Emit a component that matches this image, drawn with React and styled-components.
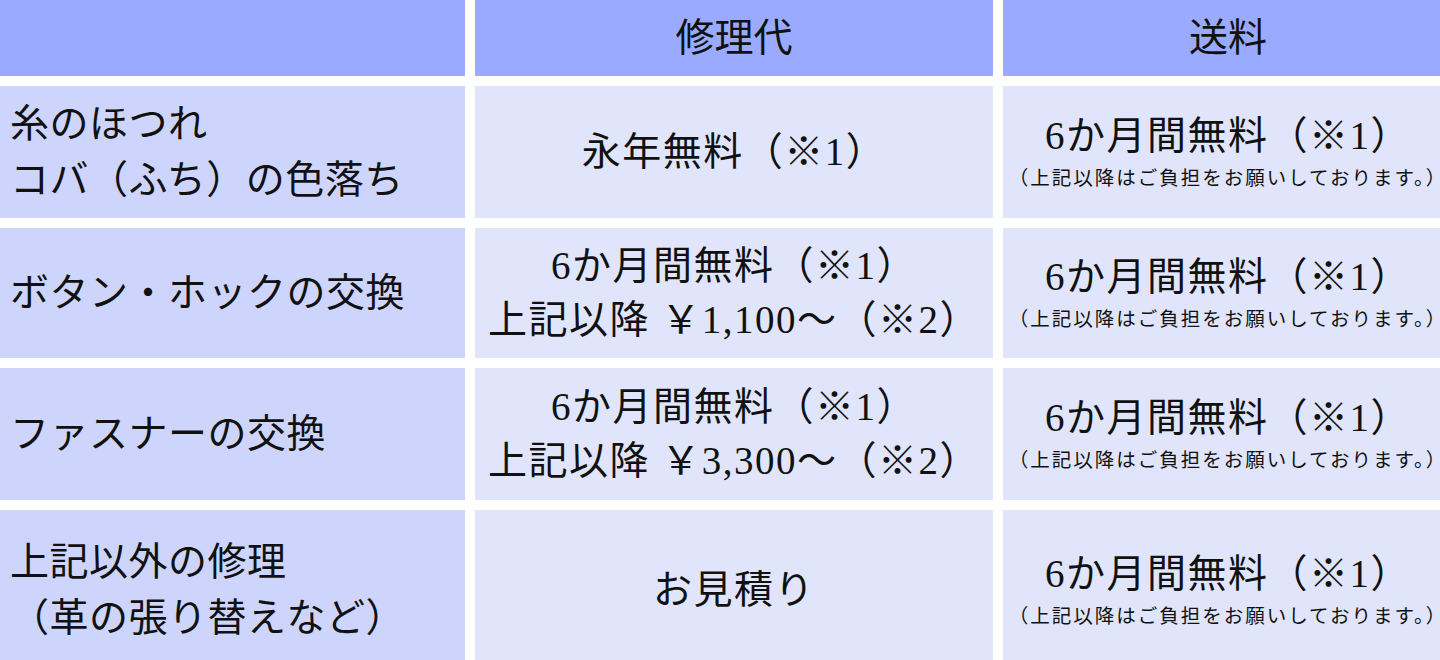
import styled, { createGlobalStyle } from "styled-components";

const GlobalStyle = createGlobalStyle`
  html, body {
    margin: 0;
    padding: 0;
    background: #ffffff;
  }
  body {
    width: 1440px;
    height: 660px;
    overflow: hidden;
    font-family: "Liberation Serif", "Noto Sans CJK JP", serif;
    color: #111111;
  }
`;

// 3 列のグリッド。右端の列はビューポートからはみ出している
const Grid = styled.div`
  display: grid;
  grid-template-columns: 465px 518px 450px;
  grid-template-rows: 76px 132px 130px 132px 160px;
  gap: 10px;
  width: max-content;
`;

const HeadCell = styled.div`
  display: flex;
  align-items: center;
  justify-content: center;
  background: #9aabff;
  font-size: 39px;
  line-height: 54px;
`;

const LabelCell = styled.div`
  display: flex;
  flex-direction: column;
  justify-content: center;
  padding-left: 10px;
  background: #cdd5fd;
  font-size: 39px;
  line-height: 56px;
  letter-spacing: 0.5px;
  white-space: nowrap;
`;

const ValueCell = styled.div`
  display: flex;
  flex-direction: column;
  align-items: center;
  justify-content: center;
  background: #e0e5fb;
  font-size: 39px;
  line-height: 54px;
  letter-spacing: 1.5px;
  white-space: nowrap;
`;

const Note = styled.span`
  font-size: 19.5px;
  line-height: 32px;
  letter-spacing: 2px;
`;

const rows = [
  {
    label: ["糸のほつれ", "コバ（ふち）の色落ち"],
    fee: ["永年無料（※1）"],
  },
  {
    label: ["ボタン・ホックの交換"],
    fee: ["6か月間無料（※1）", "上記以降 ￥1,100～（※2）"],
  },
  {
    label: ["ファスナーの交換"],
    fee: ["6か月間無料（※1）", "上記以降 ￥3,300～（※2）"],
  },
  {
    label: ["上記以外の修理", "（革の張り替えなど）"],
    fee: ["お見積り"],
  },
];

function Lines({ lines }) {
  return lines.map((line) => <span key={line}>{line}</span>);
}

export default function App() {
  return (
    <>
      <GlobalStyle />
      <Grid>
        <HeadCell />
        <HeadCell>修理代</HeadCell>
        <HeadCell>送料</HeadCell>
        {rows.map((row) => (
          <>
            <LabelCell key={row.label[0] + "l"}>
              <Lines lines={row.label} />
            </LabelCell>
            <ValueCell key={row.label[0] + "f"}>
              <Lines lines={row.fee} />
            </ValueCell>
            <ValueCell key={row.label[0] + "s"}>
              <span>6か月間無料（※1）</span>
              <Note>（上記以降はご負担をお願いしております。）</Note>
            </ValueCell>
          </>
        ))}
      </Grid>
    </>
  );
}
